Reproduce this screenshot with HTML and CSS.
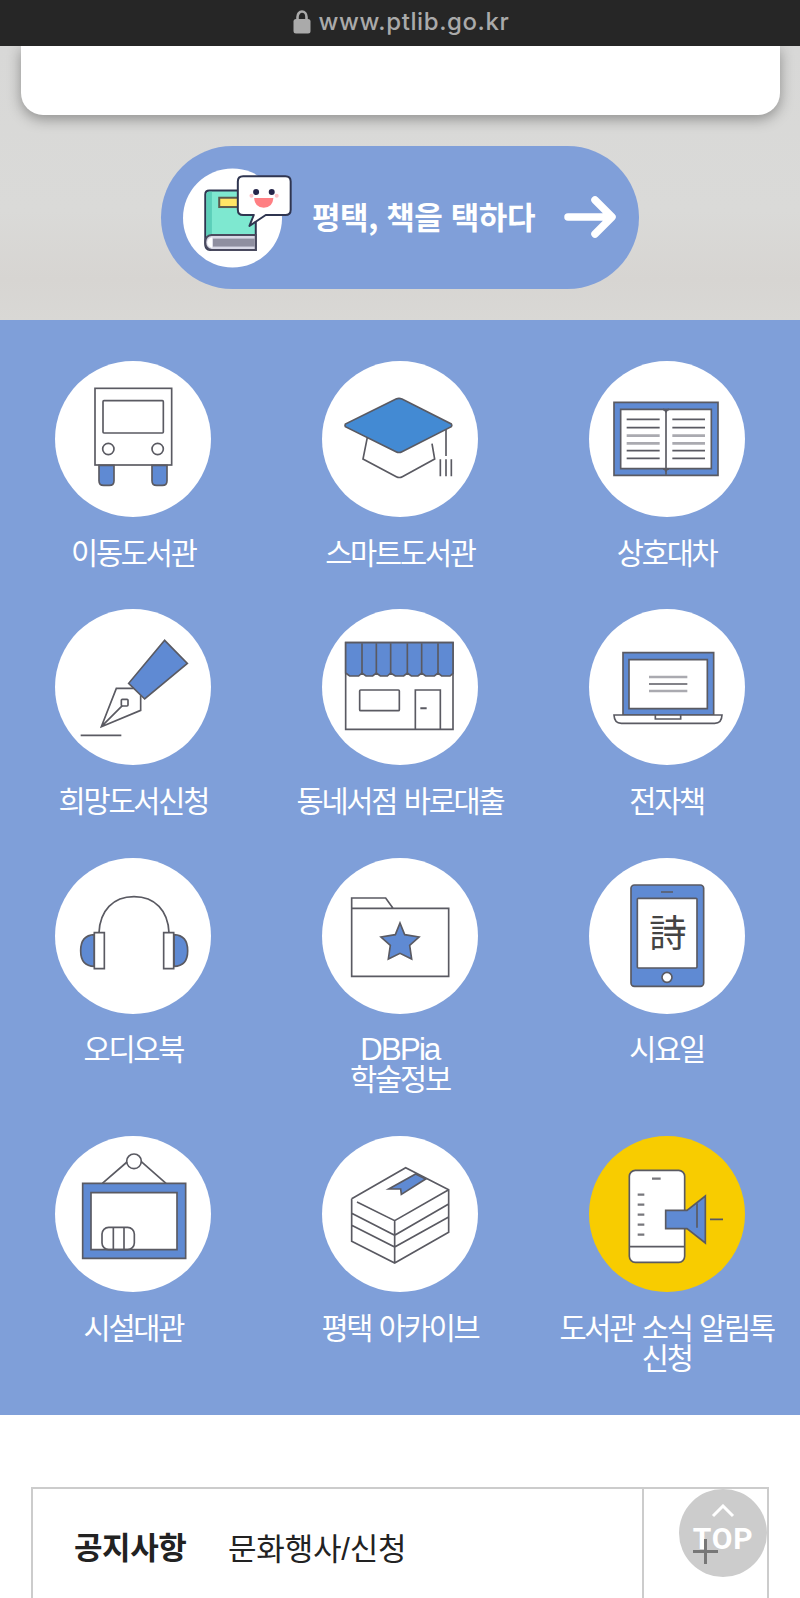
FILE: index.html
```
<!DOCTYPE html>
<html lang="ko">
<head>
    <meta charset="UTF-8">
    <meta name="viewport" content="width=device-width, initial-scale=1.0">
    <title>평택시립도서관</title>
    <link rel="stylesheet" href="styles.css">
</head>
<body>
    <header class="address-bar">
        <svg class="lock" viewBox="0 0 18 24">
            <path d="M4.5 11V7a4.5 5.5 0 0 1 9 0v4" fill="none" stroke="#aaa" stroke-width="2.6"/>
            <rect x="0.5" y="9" width="17" height="14.5" rx="2.5" fill="#aaa"/>
        </svg>
        <span>www.ptlib.go.kr</span>
    </header>

    <section class="visual">
        <div class="visual-card"></div>
        <a href="#" class="banner">
            <svg class="banner-icon" viewBox="100 97 328 300">
                <circle cx="249" cy="247" r="149" fill="#fff"/>
                <path d="M167 325V176q0-12 12-12H319V343H182q-15 0-15-18z" fill="#7ee8d0" stroke="#2f3550" stroke-width="6"/>
                <path d="M171 300V176q0-8 10-8h6V298z" fill="#5ccfb9"/>
                <path d="M319 298H186q-19 2-19 22t19 23H319z" fill="#d9d9e6" stroke="#4a4a5e" stroke-width="6"/>
                <rect x="190" y="309" width="126" height="24" fill="#8f8fa0"/>
                <path d="M188 305q-15 4-15 16t15 16z" fill="#fff"/>
                <rect x="209" y="186" width="60" height="28" fill="#ffe566" stroke="#5c5a4c" stroke-width="6"/>
                <path d="M281 121H408q16 0 16 16V222q0 16-16 16H349L300 271L313 238H281q-16 0-16-16V137q0-16 16-16z" fill="#fff" stroke="#2f3550" stroke-width="6" stroke-linejoin="round"/>
                <circle cx="320" cy="169" r="9" fill="#26264a"/>
                <circle cx="367" cy="169" r="9" fill="#26264a"/>
                <circle cx="306" cy="180" r="6" fill="#ffc4c8"/>
                <circle cx="382" cy="180" r="6" fill="#ffc4c8"/>
                <path d="M314 187H372q-2 29-29 29t-29-29z" fill="#ff7f83"/>
            </svg>
            <strong>평택, 책을 택하다</strong>
            <svg class="banner-arrow" viewBox="0 0 52 44">
                <path d="M4 21H47M31 4L48 21L31 38" fill="none" stroke="#fff" stroke-width="7.5" stroke-linecap="round" stroke-linejoin="round"/>
            </svg>
        </a>
    </section>

    <ul class="quick">
        <li>
            <svg class="icon" viewBox="46 33 468 468">
                <rect x="166" y="115" width="230" height="230"/>
                <rect x="190" y="152" width="181" height="97" rx="3"/>
                <circle cx="206" cy="297" r="17"/>
                <circle cx="354" cy="297" r="17"/>
                <path class="blue" d="M178 346H223V392q0 14-14 14H192q-14 0-14-14zM337 346H382V392q0 14-14 14H351q-14 0-14-14z"/>
            </svg>
            <p>이동도서관</p>
        </li>
        <li>
            <svg class="icon" viewBox="36 33 468 468">
                <path d="M172 262L159 327L259 380q9 5 18 0L374 327L366 281"/>
                <path d="M258 147q9-4 18 0L424 222q3 4 0 8L276 305q-9 5-18 0L106 230q-2-4 0-8z" fill="#438ad3"/>
                <path d="M408 238V318M391 328V379M408 328V379M424 328V379"/>
            </svg>
            <p>스마트도서관</p>
        </li>
        <li>
            <svg class="icon" viewBox="836 33 468 468">
                <path class="blue" d="M911 157H1223V376H911z"/>
                <path d="M931 178H1203V356H931z" fill="#fff"/>
                <path d="M1067 178V374M1058 178q9 1 9 10q0-9 9-10M1058 357q9 0 9 9q0-9 9-9"/>
                <path d="M949 208H1048M949 233H1048M949 302H1048M949 325H1048M1086 208H1184M1086 233H1184M1086 302H1184M1086 325H1184"/>
                <path class="soft" d="M949 257H1048M949 280H1048M1086 257H1184M1086 280H1184"/>
            </svg>
            <p>상호대차</p>
        </li>
        <li>
            <svg class="icon" viewBox="46 27 468 468">
                <path class="blue" d="M375 121L443 190L315 297L267 250z"/>
                <path d="M282 265H230L185 380L303 331V286M185 380L248 317M123 406H245"/>
                <rect x="245" y="298" width="20" height="20" rx="3"/>
            </svg>
            <p>희망도서신청</p>
        </li>
        <li>
            <svg class="icon" viewBox="36 27 468 468">
                <path d="M107 128H429V388H107z"/>
                <path class="blue" d="M107 128H429V220L420 228H395L384 219L373 228H347L335 219L324 228H304L292 219L281 228H256L242 219L232 228H211L199 219L188 228H168L156 219L146 228H119L107 219z"/>
                <path d="M156 130V221M199 130V221M242 130V221M292 130V221M335 130V221M384 130V221"/>
                <rect x="149" y="270" width="119" height="62" rx="3"/>
                <path d="M316 388V270H391V388"/>
                <path d="M331 325H350" stroke-width="6"/>
            </svg>
            <p>동네서점 바로대출</p>
        </li>
        <li>
            <svg class="icon" viewBox="836 27 468 468">
                <path class="blue" d="M938 345V158H1210V345z"/>
                <path d="M956 179H1191V326H956z" fill="#fff"/>
                <path class="soft" d="M1016 231H1131M1016 273H1131"/>
                <path d="M1016 252H1131"/>
                <path d="M911 345H1235q-1 25-22 25H933q-21 0-22-25z" fill="#fff"/>
                <path d="M1035 345V357H1111V345"/>
            </svg>
            <p>전자책</p>
        </li>
        <li>
            <svg class="icon" viewBox="46 22 468 468">
                <path d="M178 246C181 180 220 138 283 138S385 180 388 246"/>
                <path class="blue" d="M164 252q-41 2-41 48t41 47zM403 252q41 2 41 48t-41 47z"/>
                <path d="M164 246H194V354H164zM372 246H402V354H372z" fill="#fff"/>
            </svg>
            <p>오디오북</p>
        </li>
        <li>
            <svg class="icon" viewBox="36 22 468 468">
                <path d="M125 173V142H227L249 173M125 173H416V377H125z"/>
                <path class="blue" d="M270 217L284 252L327 259L299 284L305 325L270 308L235 325L241 284L213 259L256 252z"/>
            </svg>
            <p><span class="en">DBPia</span><br>학술정보</p>
        </li>
        <li>
            <svg class="icon" viewBox="836 22 468 468">
                <rect class="blue" x="962" y="103" width="218" height="304" rx="10"/>
                <rect x="981" y="143" width="179" height="209" rx="3" fill="#fff"/>
                <path d="M1052 124H1088"/>
                <circle cx="1070" cy="380" r="15" fill="#fff"/>
                <text x="1073" y="289" text-anchor="middle">詩</text>
            </svg>
            <p>시요일</p>
        </li>
        <li>
            <svg class="icon" viewBox="46 18 468 468">
                <path d="M188 160L262 96M304 94L379 160"/>
                <circle cx="283" cy="94" r="22"/>
                <path class="blue" d="M129 160H438V385H129z"/>
                <path d="M154 188H412V359H154z" fill="#fff"/>
                <rect x="187" y="292" width="97" height="67" rx="20"/>
                <path d="M221 292V359M253 292V359"/>
            </svg>
            <p>시설대관</p>
        </li>
        <li>
            <svg class="icon" viewBox="36 18 468 468">
                <path d="M125 206L287 113L416 179V307L254 399L125 334V206M141 216L254 272L416 179M254 272V399M125 250L254 316L416 222M125 286L254 351L416 261"/>
                <path class="blue" d="M236 177L317 132L347 147L274 193L272 177z"/>
            </svg>
            <p>평택 아카이브</p>
        </li>
        <li>
            <svg class="icon yellow" viewBox="836 18 468 468">
                <rect x="957" y="121" width="166" height="276" rx="18" fill="#fff"/>
                <path d="M957 350H1123"/>
                <path class="dots" d="M1025 146H1051M982 194H1002M982 224H1002M982 254H1002M982 284H1002M982 314H1002"/>
                <path class="blue" d="M1066 241H1130L1185 198V339L1130 296H1066z"/>
                <path d="M1160 220V293M1199 268H1238"/>
            </svg>
            <p>도서관 소식 알림톡<br>신청</p>
        </li>
    </ul>

    <section class="board">
        <div class="tabs">
            <strong>공지사항</strong>
            <span>문화행사/신청</span>
        </div>
        <div class="more">
            <a href="#" class="top-btn">
                <svg viewBox="0 0 24 14"><path d="M2 12L12 2L22 12" fill="none" stroke="#fff" stroke-width="3"/></svg>
                TOP
            </a>
            <i class="plus"></i>
        </div>
    </section>
</body>
</html>
```
FILE: styles.css
```
* {
    margin: 0;
    padding: 0;
    box-sizing: border-box;
}

body {
    height: 1598px;
    overflow: hidden;
    font-family: "Liberation Sans", "Noto Sans CJK KR", sans-serif;
    background-color: #fff;
    color: #222;
}

a {
    color: inherit;
    text-decoration: none;
}

/* 주소창 */
.address-bar {
    position: relative;
    z-index: 1;
    display: flex;
    justify-content: center;
    align-items: center;
    gap: 8px;
    height: 46px;
    padding: 0 0 3px 2px;
    background-color: #262626;
    color: #aaa;
    font-family: Inter, sans-serif;
    font-size: 24px;
    font-weight: 500;
    letter-spacing: 0.6px;
}

.lock {
    width: 18px;
    height: 24px;
}

/* 비주얼 */
.visual {
    height: 274px;
    background: linear-gradient(#d8d8d7, #dadad8 60%, #d7d5d2 85%, #d9d8d5);
}

.visual-card {
    height: 69px;
    margin: 0 20px 31px 21px;
    background-color: #fff;
    border-radius: 0 0 22px 22px;
    box-shadow: 0 4px 14px rgba(0, 0, 0, 0.35);
}

.banner {
    display: flex;
    align-items: center;
    width: 478px;
    height: 143px;
    margin: 0 auto;
    padding-left: 22px;
    border-radius: 72px;
    background-color: #809fd9;
    color: #fff;
}

.banner strong {
    width: 224px;
    margin: 0 28px 0 20px;
    padding-bottom: 4px;
    font-family: "Noto Sans CJK KR", sans-serif;
    font-size: 31px;
    letter-spacing: -0.4px;
    white-space: nowrap;
}

.banner-icon {
    width: 109px;
    height: 100px;
}

.banner-arrow {
    width: 52px;
    height: 44px;
}

/* 바로가기 메뉴 */
.quick {
    display: grid;
    grid-template-columns: repeat(3, 1fr);
    row-gap: 40.5px;
    height: 1095px;
    padding-top: 41px;
    align-content: start;
    list-style: none;
    background-color: #7f9fd9;
    color: #fff;
}

.quick li {
    text-align: center;
}

.quick p {
    margin-top: 21.5px;
    font-size: 29.5px;
    line-height: 30.3px;
    letter-spacing: -2.2px;
    word-spacing: 1.5px;
    white-space: nowrap;
}

.quick .en {
    font-size: 31px;
    line-height: 30px;
    letter-spacing: -1.7px;
}

.icon {
    display: block;
    width: 156px;
    height: 156px;
    margin: 0 auto;
    border-radius: 50%;
    background-color: #fff;
    fill: none;
    stroke: #5a5a62;
    stroke-width: 5;
}

.icon.yellow {
    background-color: #f8cc00;
}

.icon .blue {
    fill: #5f8ad3;
}

.icon .soft {
    stroke: #aaaab0;
    stroke-width: 8;
}

.icon .dots {
    stroke: #77777c;
    stroke-width: 7;
}

.icon text {
    fill: #444;
    stroke: none;
    font-family: "Noto Sans CJK KR", sans-serif;
    font-size: 112px;
}

/* 게시판 */
.board {
    display: flex;
    height: 130px;
    margin: 72px 31px 0;
    border: 2px solid #ccc;
    border-bottom: 0;
}

.tabs {
    flex: 1;
    display: flex;
    padding: 37px 0 0 41px;
    font-size: 31px;
    line-height: 46px;
    white-space: nowrap;
}

.tabs strong {
    width: 154px;
    letter-spacing: -0.4px;
}

.tabs span {
    font-size: 31px;
    letter-spacing: -0.2px;
    padding-top: 1px;
}

.more {
    position: relative;
    width: 125px;
    border-left: 2px solid #ccc;
}

.top-btn {
    position: absolute;
    top: 0;
    right: 0;
    width: 88px;
    height: 88px;
    padding-top: 15px;
    border-radius: 50%;
    background-color: #ccc;
    color: #fff;
    font: bold 30px/34px Roboto, sans-serif;
    letter-spacing: 0.8px;
    text-align: center;
}

.top-btn svg {
    display: block;
    width: 24px;
    height: 14px;
    margin: 0 auto 4px;
}

.plus {
    position: absolute;
    top: 50px;
    left: 49px;
    width: 25px;
    height: 25px;
    background: linear-gradient(#777, #777) center / 100% 3px no-repeat, linear-gradient(#777, #777) center / 3px 100% no-repeat;
}
```
